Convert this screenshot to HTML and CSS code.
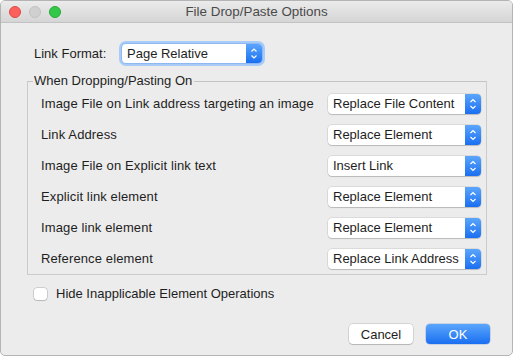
FILE: index.html
```html
<!DOCTYPE html>
<html lang="en">
<head>
    <meta charset="UTF-8">
    <title>File Drop/Paste Options</title>
    <link rel="stylesheet" href="styles.css">
</head>
<body>
    <div class="window">
        <div class="titlebar">
            <div class="lights">
                <span class="light red"></span>
                <span class="light gray"></span>
                <span class="light green"></span>
            </div>
            <div class="title">File Drop/Paste Options</div>
        </div>

        <div class="content">
            <div class="format-row">
                <label class="format-label">Link Format:</label>
                <div class="popup focused">
                    <span class="popup-text">Page Relative</span>
                    <span class="stepper">
                        <svg width="16" height="19" viewBox="0 0 16 19"><path d="M5.5 7.5 L8 5 L10.5 7.5 M5.5 11.5 L8 14 L10.5 11.5" fill="none" stroke="#fff" stroke-width="1.2"/></svg>
                    </span>
                </div>
            </div>

            <fieldset class="group">
                <legend>When Dropping/Pasting On</legend>

                <div class="row">
                    <span class="row-label">Image File on Link address targeting an image</span>
                    <div class="popup wide">
                        <span class="popup-text">Replace File Content</span>
                        <span class="stepper"><svg width="16" height="20" viewBox="0 0 16 20"><path d="M5.5 8 L8 5.5 L10.5 8 M5.5 12 L8 14.5 L10.5 12" fill="none" stroke="#fff" stroke-width="1.2"/></svg></span>
                    </div>
                </div>
                <div class="row">
                    <span class="row-label">Link Address</span>
                    <div class="popup wide">
                        <span class="popup-text">Replace Element</span>
                        <span class="stepper"><svg width="16" height="20" viewBox="0 0 16 20"><path d="M5.5 8 L8 5.5 L10.5 8 M5.5 12 L8 14.5 L10.5 12" fill="none" stroke="#fff" stroke-width="1.2"/></svg></span>
                    </div>
                </div>
                <div class="row">
                    <span class="row-label">Image File on Explicit link text</span>
                    <div class="popup wide">
                        <span class="popup-text">Insert Link</span>
                        <span class="stepper"><svg width="16" height="20" viewBox="0 0 16 20"><path d="M5.5 8 L8 5.5 L10.5 8 M5.5 12 L8 14.5 L10.5 12" fill="none" stroke="#fff" stroke-width="1.2"/></svg></span>
                    </div>
                </div>
                <div class="row">
                    <span class="row-label">Explicit link element</span>
                    <div class="popup wide">
                        <span class="popup-text">Replace Element</span>
                        <span class="stepper"><svg width="16" height="20" viewBox="0 0 16 20"><path d="M5.5 8 L8 5.5 L10.5 8 M5.5 12 L8 14.5 L10.5 12" fill="none" stroke="#fff" stroke-width="1.2"/></svg></span>
                    </div>
                </div>
                <div class="row">
                    <span class="row-label">Image link element</span>
                    <div class="popup wide">
                        <span class="popup-text">Replace Element</span>
                        <span class="stepper"><svg width="16" height="20" viewBox="0 0 16 20"><path d="M5.5 8 L8 5.5 L10.5 8 M5.5 12 L8 14.5 L10.5 12" fill="none" stroke="#fff" stroke-width="1.2"/></svg></span>
                    </div>
                </div>
                <div class="row">
                    <span class="row-label">Reference element</span>
                    <div class="popup wide">
                        <span class="popup-text">Replace Link Address</span>
                        <span class="stepper"><svg width="16" height="20" viewBox="0 0 16 20"><path d="M5.5 8 L8 5.5 L10.5 8 M5.5 12 L8 14.5 L10.5 12" fill="none" stroke="#fff" stroke-width="1.2"/></svg></span>
                    </div>
                </div>
            </fieldset>

            <div class="check-row">
                <span class="checkbox"></span>
                <span>Hide Inapplicable Element Operations</span>
            </div>

            <div class="buttons">
                <button class="btn">Cancel</button>
                <button class="btn primary">OK</button>
            </div>
        </div>
    </div>
</body>
</html>
```

FILE: styles.css
```css
* {
    box-sizing: border-box;
}
body {
    margin: 0;
    background: #fff;
    font-family: "Liberation Sans", Arial, sans-serif;
    font-size: 13px;
    color: #1e1e1e;
}
.window {
    width: 513px;
    height: 356px;
    background: #ececec;
    border: 1px solid #b4b4b4;
    border-radius: 5px;
    overflow: hidden;
}
.titlebar {
    height: 22px;
    display: flex;
    align-items: center;
    position: relative;
    background: linear-gradient(#ebebeb, #d5d5d5);
    border-bottom: 1px solid #c2c2c2;
}
.lights {
    display: flex;
    gap: 8px;
    padding-left: 8px;
}
.light {
    width: 12px;
    height: 12px;
    border-radius: 50%;
}
.red { background: #fc605c; border: 1px solid #de4a45; }
.gray { background: #d0d0d0; border: 1px solid #c2c2c2; }
.green { background: #34c84a; border: 1px solid #27aa35; }
.title {
    position: absolute;
    left: 0;
    right: 0;
    text-align: center;
    color: #4a4a4a;
    font-size: 13.4px;
}
.content {
    padding: 19px 25px 0 25px;
}
.format-row {
    display: flex;
    align-items: center;
    height: 23px;
}
.format-label {
    width: 96px;
    padding-left: 8px;
}
.popup {
    display: flex;
    align-items: stretch;
    height: 20px;
    background: #fff;
    border-radius: 4px;
    box-shadow: 0 0 0 0.5px rgba(0, 0, 0, 0.15), 0 1px 1px rgba(0, 0, 0, 0.15);
    overflow: hidden;
}
.popup.focused {
    width: 140px;
    height: 19px;
    box-shadow: 0 0 0 1px #8eb8f4, 0 0 0 3px #a9cbf7;
}
.popup-text {
    flex: 1;
    padding-left: 5px;
    line-height: 20px;
    white-space: nowrap;
}
.popup.focused .popup-text {
    line-height: 19px;
}
.stepper {
    width: 16px;
    display: flex;
    background: linear-gradient(#5ba6fc, #1a6ff1);
}
.popup.wide {
    width: 153px;
}
.group {
    margin: 9px 0 0 1px;
    padding: 0 5px 0 13px;
    border: 1px solid #cbcbcb;
    border-top-color: #c4c4c4;
    min-width: 0;
}
.group legend {
    padding: 0 2px 0 1px;
    margin-left: -8px;
    line-height: 14px;
}
.row {
    display: flex;
    align-items: center;
    justify-content: space-between;
    height: 31px;
}
.row-label {
    letter-spacing: 0.12px;
}
.check-row {
    display: flex;
    align-items: center;
    gap: 9px;
    margin: 11px 0 0 8px;
}
.checkbox {
    width: 13px;
    height: 12px;
    background: #fff;
    border-radius: 3px;
    box-shadow: 0 0 0 0.5px rgba(0, 0, 0, 0.25), 0 1px 1px rgba(0, 0, 0, 0.1);
}
.buttons {
    display: flex;
    justify-content: flex-end;
    gap: 13px;
    margin: 23px -3px 0 0;
}
.btn {
    width: 64px;
    height: 20px;
    border: none;
    border-radius: 4px;
    background: #fff;
    font-family: "Liberation Sans", Arial, sans-serif;
    font-size: 13px;
    color: #1e1e1e;
    box-shadow: 0 0 0 0.5px rgba(0, 0, 0, 0.2), 0 1px 1px rgba(0, 0, 0, 0.15);
    padding: 0;
}
.btn.primary {
    background: linear-gradient(#5ba6fc, #1a6ff1);
    color: #fff;
    box-shadow: 0 0 0 0.5px rgba(0, 60, 200, 0.3);
}
```
